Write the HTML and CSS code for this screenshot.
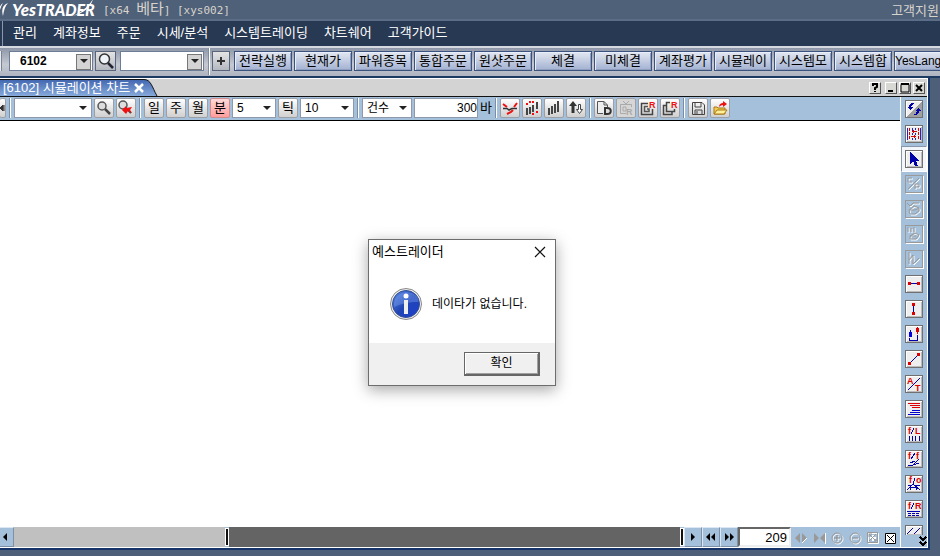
FILE: index.html
```html
<!DOCTYPE html>
<html lang="ko">
<head>
<meta charset="utf-8">
<title>YesTrader</title>
<link rel="stylesheet" href="styles.css">
</head>
<body>
<header class="titlebar">
  <svg class="wing" width="12" height="20" viewBox="0 0 12 20" aria-hidden="true"><path d="M8 3C3 5 1 9 3 16C4 10 5 6 8 3ZM3 3C0 5-1 8-1 12C1 8 1 6 3 3Z" fill="#fff"/></svg>
  <span class="logo"><span class="logo-yes">Yes</span> <span class="logo-trader">TRADER</span>
    <svg class="swash" width="24" height="18" viewBox="0 0 24 18" aria-hidden="true"><path d="M1 17C10 13 16 8 21 0C19 8 12 14 1 17Z" fill="#fff"/></svg>
  </span>
  <span class="session">[x64 <span class="session-ko">베타</span>] [xys002]</span>
  <a class="support" href="#">고객지원</a>
</header>
<nav class="menubar">
  <a href="#">관리</a><a href="#">계좌정보</a><a href="#">주문</a><a href="#">시세/분석</a><a href="#">시스템트레이딩</a><a href="#">차트쉐어</a><a href="#">고객가이드</a>
</nav>
<div class="quickbar">
  <span class="grip"></span>
  <span class="combo"><select class="bold" aria-label="화면번호"><option>6102</option></select></span>
  <button class="square" aria-label="검색"><svg width="18" height="18" viewBox="0 0 18 18"><circle cx="7.500" cy="7" r="5" fill="#eef4fa" stroke="#333" stroke-width="1.500"/><path d="M11 11L16 16" stroke="#223" stroke-width="2.500"/></svg></button>
  <span class="combo second"><select aria-label="종목"><option></option></select></span>
  <span class="divider"></span>
  <button class="square plus" aria-label="추가"><svg width="10" height="10" viewBox="0 0 10 10"><path d="M1 5H9M5 1V9" stroke="#333" stroke-width="2"/></svg></button>
  <div class="shortcuts">
    <button>전략실행</button><button>현재가</button><button>파워종목</button><button>통합주문</button><button>원샷주문</button><button>체결</button><button>미체결</button><button>계좌평가</button><button>시뮬레이</button><button>시스템모</button><button>시스템합</button><button class="latin">YesLang</button>
  </div>
</div>
<main class="window">
  <div class="tabrow">
    <div class="tab">
      <svg class="tabshape" viewBox="0 0 158 17" width="158" height="17" aria-hidden="true"><defs><linearGradient id="tg" x2="0" y2="1"><stop stop-color="#4266b0"/><stop offset="1" stop-color="#86aada"/></linearGradient></defs><path d="M0 .5H144C151 .5 152 8 157 17H0Z" fill="url(#tg)"/><path d="M0 .5H144C151 .5 152 8 157 17" fill="none" stroke="#111"/></svg>
      <span>[6102] 시뮬레이션 차트</span>
      <button aria-label="탭 닫기"><svg width="10" height="10" viewBox="0 0 10 10"><path d="M1 1L9 9M9 1L1 9" stroke="#fff" stroke-width="2.500"/></svg></button>
    </div>
    <div class="controls">
      <button class="help" aria-label="도움말"><svg width="12" height="12" viewBox="0 0 12 12"><path d="M4 4V2H8V5L6 6V8M6 9V10" fill="none" stroke="#000" stroke-width="2"/></svg></button>
      <button aria-label="최소화"><svg width="12" height="12"><path d="M3 9H8" stroke="#000" stroke-width="2"/></svg></button>
      <button aria-label="최대화"><svg width="12" height="12"><path d="M2 2.500H10V10H2Z" fill="none" stroke="#000"/><path d="M2 2H10" stroke="#000" stroke-width="2"/></svg></button>
      <button aria-label="닫기"><svg width="12" height="12"><path d="M3 3L9 9M9 3L3 9" stroke="#000" stroke-width="2"/></svg></button>
    </div>
  </div>
  <div class="body">
    <div class="chart">
      <div class="tools">
        <button class="tool cut" aria-label="이전"><svg width="6" height="18"><path d="M0 9L3 6V12ZM4 6V12" fill="#333" stroke="#333"/></svg></button>
        <span class="divider"></span>
        <span class="drop w78"><select aria-label="종목코드"><option></option></select></span>
        <button class="tool" aria-label="찾기"><svg width="18" height="18"><circle cx="7" cy="7" r="4" fill="#ddd" stroke="#555" stroke-width="1.500"/><path d="M10 10L15 15" stroke="#444" stroke-width="2.500"/></svg></button>
        <button class="tool" aria-label="다시 찾기"><svg width="18" height="18"><circle cx="6" cy="6" r="4" fill="#ddd" stroke="#555" stroke-width="1.500"/><path d="M9 9L14 14" stroke="#444" stroke-width="2"/><path d="M5 11L9 7V9L15 8L13 11L15 14L11 12L9 15Z" fill="#e11"/></svg></button>
        <span class="divider"></span>
        <button class="tool">일</button><button class="tool">주</button><button class="tool">월</button><button class="tool on">분</button>
        <span class="drop w44"><select aria-label="분 단위"><option>5</option></select></span>
        <button class="tool">틱</button>
        <span class="drop w54"><select aria-label="틱 단위"><option>10</option></select></span>
        <span class="divider"></span>
        <span class="drop w50"><select aria-label="기준"><option>건수</option></select></span>
        <label class="bars"><input value="300" aria-label="바 개수"><span>바</span></label>
        <span class="divider"></span>
        <button class="tool" aria-label="추세"><svg width="18" height="18"><path d="M2 9.500H6L8 11L11 9.500H16" fill="none" stroke="#333" stroke-width="1.500"/><path d="M2 5L6 8M6 15L10 13L12 11M13 8L16 4" fill="none" stroke="#e11" stroke-width="2"/></svg></button>
        <button class="tool" aria-label="신호"><svg width="18" height="18" shape-rendering="crispEdges"><path d="M4 9V16M7 8V15M10 6V13M14 3V10" stroke="#444" stroke-width="2"/><path d="M3 5H5M6 3H8M9 3H11M9 15H11M13 13H15" stroke="#e11" stroke-width="2"/></svg></button>
        <button class="tool" aria-label="막대"><svg width="18" height="18" shape-rendering="crispEdges"><path d="M4 9V16M7 7V15M10 5V14M13 2V13" stroke="#444" stroke-width="2"/></svg></button>
        <button class="tool" aria-label="정렬"><svg width="18" height="18"><path d="M6 2L10 7H7.500V14H4.500V7H2Z" fill="#333"/><path d="M11.500 5.500H13.500V10.500H15.500L12.500 14.500L9.500 10.500H11.500Z" fill="#fff" stroke="#444"/></svg></button>
        <span class="divider"></span>
        <button class="tool" aria-label="문서"><svg width="18" height="18"><path d="M8 14.500H2.500V2.500H9L12.500 6V8M9 2.500V6H12" fill="#eee" stroke="#555"/><path d="M10 9V15H12C17 15 17 9 12 9Z" fill="none" stroke="#333" stroke-width="2"/></svg></button>
        <button class="tool off" aria-label="방송"><svg width="18" height="18"><path d="M6 2L9 5L12 2M9 14.500H3.500V5.500H14.500V8M6 8H9V12H6Z" fill="none" stroke="#aaa"/><text x="9" y="16" class="mark gray">R</text></svg></button>
        <button class="tool" aria-label="그룹 복원"><svg width="18" height="18"><path d="M9 4.500H2.500V15.500H13.500V10" fill="none" stroke="#444" stroke-width="1.500"/><path d="M9 7.500H5.500V12.500H10V10H8" fill="none" stroke="#555" stroke-width="1.500"/><text x="10" y="9" class="mark">R</text></svg></button>
        <button class="tool" aria-label="복원"><svg width="18" height="18"><path d="M9 3.500H5.500V12.500H13.500V10M5 6.500H2.500V15.500H11V13" fill="none" stroke="#444" stroke-width="1.500"/><text x="10" y="9" class="mark">R</text></svg></button>
        <span class="divider"></span>
        <button class="tool" aria-label="저장"><svg width="18" height="18"><path d="M3.500 3.500H13L15.500 6V15.500H3.500ZM6 4V8H12V4M6 15V11H13V15M8 12V15" fill="none" stroke="#444"/></svg></button>
        <button class="tool" aria-label="열기"><svg width="18" height="18"><path d="M3 15V8H6L7 9H14V15Z" fill="#f2cc58" stroke="#a87812"/><path d="M3 15L6 11H16L13 15Z" fill="#fff09a" stroke="#a87812"/><path d="M8 8C8 5 10 4 12 4V2L16 5L12 8V6C10 6 9 7 8 8Z" fill="#e11"/></svg></button>
      </div>
      <div class="canvas"></div>
      <div class="scroll">
        <button class="arrow first" aria-label="왼쪽"><svg width="12" height="12"><path d="M2 6L6 2V10Z"/></svg></button>
        <div class="track"></div><span class="handle"></span><div class="range"></div><span class="handle"></span>
        <button class="arrow" aria-label="오른쪽"><svg width="12" height="12"><path d="M8 6L4 2V10Z"/></svg></button>
        <button class="arrow" aria-label="빠르게 왼쪽"><svg width="12" height="12"><path d="M1 6L5 2V10ZM6 6L10 2V10Z"/></svg></button>
        <button class="arrow" aria-label="빠르게 오른쪽"><svg width="12" height="12"><path d="M6 6L2 2V10ZM11 6L7 2V10Z"/></svg></button>
        <input class="count" value="209" aria-label="표시 개수">
        <div class="zooms">
          <button aria-label="넓게"><svg width="14" height="14"><path d="M1 7L6 2V12Z" fill="#999"/><path d="M8 2L13 7L8 12Z" fill="#999"/><path d="M8 12L13 7" stroke="#fff"/></svg></button>
          <button aria-label="좁게"><svg width="14" height="14"><path d="M2 2L7 7L2 12ZM13 2L8 7L13 12Z" fill="#999"/><path d="M13.500 2V13" stroke="#fff"/></svg></button>
          <button aria-label="확대"><svg width="14" height="14"><circle cx="8" cy="8" r="5" fill="none" stroke="#fff"/><path d="M5 8H11M8 5V11" stroke="#fff"/><circle cx="7" cy="7" r="5" fill="none" stroke="#999"/><path d="M4 7H10M7 4V10" stroke="#888"/></svg></button>
          <button aria-label="축소"><svg width="14" height="14"><circle cx="8" cy="8" r="5" fill="none" stroke="#fff"/><path d="M5 8H11" stroke="#fff"/><circle cx="7" cy="7" r="5" fill="none" stroke="#999"/><path d="M4 7H10" stroke="#888"/></svg></button>
          <button aria-label="맞춤"><svg width="14" height="14"><path d="M2.500 2.500H12.500V12.500H2.500Z" fill="none" stroke="#fff"/><path d="M4 7H10M7 4V10" stroke="#fff" stroke-width="2"/><path d="M1.500 1.500H11.500V11.500H1.500ZM3 3L10 10M10 3L3 10M3 6V3H6M8 10H10V8" fill="none" stroke="#999"/></svg></button>
          <button aria-label="초기화"><svg width="14" height="14"><path d="M1.500 2.500H11.500V12.500H1.500Z" fill="#fff" stroke="#000"/><path d="M3 4L10 11M10 4L3 11" stroke="#000"/></svg></button>
        </div>
      </div>
    </div>
    <aside class="side">
      <button aria-label="새로고침"><svg viewBox="0 0 16 16"><path d="M0 16L16 0V16Z" fill="#a0a0a0"/><path d="M8 2C5 2 3 3 3 6H1L4 9L7 6H5C5 4 6 3 8 3ZM8 14C12 14 13 12 13 10H15L12 7L9 10H11C11 12 10 13 8 13Z" fill="#00a"/></svg></button>
      <button aria-label="동기화"><svg viewBox="0 0 16 16"><path d="M1.500 2V14M14.500 2V14M6.500 2V5M6.500 7V9M6.500 12V14M9.500 2V4M9.500 7V9M9.500 12V14" stroke="#22c"/><path d="M3.500 2V14M12.500 2V14" stroke="#d00" stroke-dasharray="3 1"/><path d="M6 5.500H11M5 10.500H10M7.500 4V7M8.500 9V12" stroke="#d00"/></svg></button>
      <span class="picked"><button aria-label="선택"><svg viewBox="0 0 16 16"><path d="M4 1V13L7 10L9 15H12L10 10H13Z" fill="#00a"/></svg></button></span>
      <button class="dis" aria-label="도구 1" disabled><svg viewBox="0 0 16 16"><path d="M3 14L14 3M7 3H3V7H7M10 14V9H14V12H10" class="w"/><path d="M2 13L13 2M6 2H2V6H6M9 13V8H13V11H9" class="g"/></svg></button>
      <button class="dis" aria-label="도구 2" disabled><svg viewBox="0 0 16 16"><path d="M2 3L5 6L8 3H14M4 10L9 6L14 8V11L10 14H5Z" class="w"/><path d="M1 2L4 5L7 2H13M3 9L8 5L13 7V10L9 13H4ZM4 9H9L13 7" class="g"/></svg></button>
      <button class="dis" aria-label="도구 3" disabled><svg viewBox="0 0 16 16"><path d="M3 2V7M6 3V7M9 2V7M5 11L10 8L14 10L11 14H5Z" class="w"/><path d="M2 1V6M5 2V6M8 1V6M4 10L9 7L13 9L10 13H4ZM4 10H10" class="g"/></svg></button>
      <button class="dis" aria-label="도구 4" disabled><svg viewBox="0 0 16 16"><path d="M4 2V14M4 10L8 5V14L14 8" class="w"/><path d="M3 1V13M3 9L7 4V13L13 7" class="g"/></svg></button>
      <button aria-label="수평선"><svg viewBox="0 0 16 16"><path d="M5 7.500H12" stroke="#00a"/><path d="M2 6H5V9H2ZM11 6H14V9H11Z" fill="#d00"/></svg></button>
      <button aria-label="수직선"><svg viewBox="0 0 16 16"><path d="M7.500 4V12" stroke="#00a"/><path d="M6 2H9V5H6ZM6 11H9V14H6Z" fill="#d00"/></svg></button>
      <button aria-label="구간"><svg viewBox="0 0 16 16"><path d="M3 6H6V11H3ZM4 4H5V6H4Z" fill="#00d"/><path d="M3.500 12V14.500H11.500V9" fill="none" stroke="#00a"/><path d="M10 2H13V6H10ZM11 1H12V8H11Z" fill="#d00"/></svg></button>
      <button aria-label="추세선"><svg viewBox="0 0 16 16"><path d="M4 12L12 4" stroke="#00a"/><path d="M2 11H5V14H2ZM11 2H14V5H11Z" fill="#d00"/></svg></button>
      <button aria-label="문자"><svg viewBox="0 0 16 16"><path d="M2 14L14 2" stroke="#00a"/><text x="1" y="8" class="glyph">A</text><text x="9" y="15" class="glyph">T</text></svg></button>
      <button aria-label="수평 비율"><svg viewBox="0 0 16 16"><path d="M2 2H14V3H2ZM4 4H14V5H4ZM6 6H14V7H6Z" fill="#d00"/><path d="M6 9H14V10H6ZM4 11H14V12H4ZM2 13H14V14H2Z" fill="#00c"/></svg></button>
      <button aria-label="수직 비율"><svg viewBox="0 0 16 16"><text x="2" y="8" class="glyph">f</text><text x="9" y="8" class="glyph">L</text><path d="M5 8L8 2M3.500 10V15M6.500 10V15M9.500 10V15M13.500 10V15" stroke="#00a"/></svg></button>
      <button aria-label="호 비율"><svg viewBox="0 0 16 16"><text x="2" y="8" class="glyph">f</text><text x="10" y="8" class="glyph">f</text><path d="M5 8L9 2M2 14H7L13 8M4 12L9 10M7 14L13 12" fill="none" stroke="#00a"/></svg></button>
      <button aria-label="원 비율"><svg viewBox="0 0 16 16"><text x="3" y="7" class="glyph">f</text><text x="10" y="7" class="glyph">o</text><path d="M9 2L7 8M1 14L7 8L14 14M4 14C4 10 11 10 11 14M2 10L5 9M10 9L14 10" fill="none" stroke="#00a"/></svg></button>
      <button aria-label="되돌림"><svg viewBox="0 0 16 16"><text x="2" y="8" class="glyph">f</text><text x="9" y="8" class="glyph">R</text><path d="M5 8L8 2M1 10.500H14" stroke="#00a"/><path d="M2 12.500H14M2 14.500H14" stroke="#00a" stroke-dasharray="3 1"/></svg></button>
      <button class="clipped" aria-label="평행선"><svg viewBox="0 0 16 16"><path d="M1 8L7 2M8 8L14 2" stroke="#00a"/></svg></button>
      <button class="more" aria-label="더 보기"><svg viewBox="0 0 8 10"><path d="M1 1L4 4L7 1M1 6L4 9L7 6" fill="none" stroke="#000" stroke-width="2"/></svg></button>
    </aside>
  </div>
</main>
<section class="dialog" role="dialog" aria-labelledby="dlg">
  <div class="dialog-head"><span id="dlg">예스트레이더</span>
    <button aria-label="닫기"><svg width="12" height="12"><path d="M1 1L11 11M11 1L1 11" stroke="#111" stroke-width="1.200"/></svg></button></div>
  <div class="dialog-body">
    <svg width="32" height="32" viewBox="0 0 32 32" aria-hidden="true"><defs><linearGradient id="ig" x2="1" y2="1"><stop stop-color="#5e8fe8"/><stop offset=".5" stop-color="#2145b4"/><stop offset="1" stop-color="#1d3fd0"/></linearGradient></defs><circle cx="16" cy="16" r="15.500" fill="#eee" stroke="#888"/><circle cx="16" cy="16" r="13.500" fill="url(#ig)" stroke="#334f94"/><path d="M4 19C3 8 12 2 22 5C29 8 29 13 28 14C20 14 10 16 4 19Z" fill="#7fa6f0" opacity=".4"/><circle cx="16" cy="8" r="2.500" fill="#fff"/><path d="M14 12H18V26H14Z" fill="#eee"/></svg>
    <p>데이타가 없습니다.</p>
  </div>
  <div class="dialog-foot"><button>확인</button></div>
</section>
</body>
</html>
```
FILE: styles.css
```css
* { box-sizing: border-box; }
body {
  margin: 0; height: 100vh; overflow: hidden; display: flex; flex-direction: column;
  background: #4d5f79; color: #000;
  font: 13px/16px "Liberation Sans", "Noto Sans CJK KR", sans-serif;
}
button, input, select { font: inherit; color: inherit; margin: 0; padding: 0; border-radius: 0; }
button { display: flex; align-items: center; justify-content: center; flex: none; white-space: nowrap; }
svg { display: block; flex: none; }
a { color: inherit; text-decoration: none; white-space: nowrap; }

.titlebar { height: 21px; flex: none; display: flex; align-items: center; background: #4f6079; border-bottom: 2px solid #5b6d87; color: #d8d4cc; }
.logo { position: relative; width: 86px; margin-right: 5px; padding-top: 2px; color: #fff; font: italic 900 14px/18px Lato, sans-serif; white-space: nowrap; }
.logo-yes { font-size: 17px; }
.logo-trader { font-size: 16px; margin-left: -3px; }
.swash { position: absolute; left: 60px; top: 0; }
.session { font: 11px/20px "DejaVu Sans Mono", "Noto Sans CJK KR", monospace; white-space: pre; }
.session-ko { font-size: 15px; }
.support { margin-left: auto; padding: 2px 1px 0 0; }

.menubar { height: 25px; flex: none; display: flex; align-items: center; gap: 16px; padding: 0 10px 2px; margin-left: 2px; border-left: 1px solid #8b98ab; background: #283953; box-shadow: -3px 0 #283953; color: #fff; }

.quickbar { height: 32px; flex: none; display: flex; align-items: center; padding-bottom: 2px; background: linear-gradient(#8e97a8, #c5c9d2 60%, #aeb4c0); border-top: 2px solid #d6dae0; border-bottom: 2px solid #1d3a63; overflow: hidden; }
.grip { width: 2px; height: 20px; background: #e8ebf0; border-right: 1px solid #7b8494; margin-right: 7px; flex: none; }
.combo, .drop { position: relative; flex: none; height: 20px; background: #fff; border: 1px solid #6c7d98; }
.combo { width: 84px; }
.combo select, .drop select { appearance: none; width: 100%; height: 100%; border: 0; background: none; padding-left: 4px; display: block; font-size: 12px; line-height: 16px; }
.combo select.bold { font-weight: bold; padding-left: 10px; }
.combo::before { content: ""; position: absolute; right: 1px; top: 2px; width: 13px; height: 14px; background: #d4d4d4; border: 1px solid #777; }
.combo::after, .drop::after { content: ""; position: absolute; pointer-events: none; right: 4px; top: 7px; border: 4px solid transparent; border-top-color: #222; border-bottom: 0; }
.square { width: 21px; height: 20px; margin: 0 4px 0 2px; border: 1px solid #59657a; background: linear-gradient(#e4e4e4, #b4b8c0); }
.plus { width: 18px; margin: 0 4px 0 2px; }
.divider { flex: none; width: 2px; height: 20px; border-left: 1px solid #7d8ca1; background: #fff; }
.quickbar .divider { margin: 0 0 0 4px; height: 28px; }
.shortcuts { display: flex; gap: 2px; }
.shortcuts button { width: 58px; height: 20px; border: 1px solid #3b527e; box-shadow: inset 1px 1px #e9effa, inset -1px -1px #8f9fc0; background: linear-gradient(#e2e7f1, #a3b2d2); }
.shortcuts .latin { justify-content: flex-start; font-size: 12px; }

.window { flex: 1; min-height: 0; margin: 0 10px 6px 0; display: flex; flex-direction: column; border-right: 2px solid #173468; border-bottom: 2px solid #173468; padding: 0 1px 1px 0; background: #fff; }
.tabrow { height: 19px; flex: none; display: flex; justify-content: space-between; background: #d3d3d3; border-bottom: 1px solid #111; border-top: 1px solid #fff; }
.tab { position: relative; display: flex; align-items: center; gap: 4px; padding: 1px 22px 0 3px; color: #fff; }
.tabshape { position: absolute; left: 0; top: 0; }
.tab span, .tab button { position: relative; white-space: nowrap; }
.tab button { border: 0; background: none; }
.controls { display: flex; gap: 2px; padding: 3px 2px 0 0; }
.controls button { width: 12px; height: 12px; border: 1px solid; border-color: #fff #555 #555 #fff; background: #d8d8d4; }
.controls .help { margin-right: 2px; }

.body { flex: 1; min-height: 0; display: flex; }
.chart { flex: 1; min-width: 0; display: flex; flex-direction: column; }
.tools { height: 24px; flex: none; display: flex; align-items: center; gap: 2px; padding-bottom: 2px; background: #a5c0da; border-bottom: 1px solid #000; }
.tool { width: 20px; height: 20px; border: 1px solid #9d9fa6; border-radius: 2px; background: linear-gradient(#fff, #e6e6e6 50%, #d0d0d0); }
.tool.on { background: linear-gradient(#ffd9d9, #ff9d9d); border-color: #d08b8b; }
.tool.off { background: #d6d6d6; }
.tool.cut { width: 6px; border-left: 0; }
.tools .divider { margin: 0 1px; }
.drop { border-color: #8e9aac; }
.w78 { width: 78px; } .w44 { width: 44px; } .w54 { width: 54px; } .w50 { width: 50px; }
.bars { display: flex; align-items: center; gap: 2px; }
.bars input { width: 64px; height: 20px; border: 1px solid #8e9aac; text-align: right; font-size: 12px; background: #fff; }
.mark { font: bold 9px "Liberation Sans", sans-serif; fill: #e11; }
.mark.gray { fill: #aaa; }
.canvas { flex: 1; background: #fff; }
.scroll { height: 20px; flex: none; display: flex; background: #a5c0da; }
.arrow { width: 18px; height: 20px; border: 1px solid; border-color: #dbe8f4 #7c91a8 #7c91a8 #dbe8f4; background: #a5c0da; }
.arrow.first { width: 14px; border-left: 0; }
.track { flex: 211; background: #c0c0c0; }
.range { flex: 452; background: #646464; }
.handle { width: 4px; margin: 1px 0; border: 1px solid #fff; background: #111; }
.count { width: 53px; height: 20px; border: 2px solid; border-color: #666 #eee #eee #666; text-align: right; padding-right: 2px; background: #fff; }
.zooms { display: flex; align-items: center; gap: 4px; padding: 2px 2px 0 3px; }
.zooms button { border: 0; background: none; }

.side { width: 27px; flex: none; display: flex; flex-direction: column; align-items: center; gap: 7px; padding: 3px 0 0; overflow: hidden; background: #a5c0da; border-left: 1px solid #fff; }
.side button { width: 18px; height: 18px; border: 1px solid #707070; background: #eee; box-shadow: inset 1px 1px #fff, inset -1px -1px #bbb; }
.side button svg { width: 16px; height: 16px; shape-rendering: crispEdges; }
.picked { flex: none; padding: 3px; margin: -4px 0; background: #f3f7fb; border: 1px solid; border-color: #8796a8 #fff #fff #8796a8; }
.side .dis { background: #a5c0da; border: 1px solid #999; box-shadow: 1px 1px #fff; }
.w, .g { fill: none; stroke: #fff; }
.g { stroke: #999; }
.side .dis svg { shape-rendering: auto; }
.glyph { font: bold 9px "Liberation Sans", sans-serif; fill: #d00; }
.side .clipped { height: 10px; align-items: flex-start; overflow: hidden; border-bottom: 0; }
.side .more { width: 8px; height: 10px; align-self: flex-end; margin-top: -6px; border: 0; background: none; box-shadow: none; }
.side .more svg { width: 8px; height: 10px; }

.dialog { position: absolute; left: 368px; top: 239px; width: 188px; border: 1px solid #6d6d6d; background: #fff; box-shadow: 0 4px 14px rgba(0, 0, 0, .35); }
.dialog-head { display: flex; justify-content: space-between; align-items: center; height: 24px; padding: 0 9px 0 3px; }
.dialog-head button { border: 0; background: none; }
.dialog-body { display: flex; align-items: center; gap: 10px; height: 79px; padding: 1px 21px 0; font-size: 12px; }
.dialog-body p { margin: 0; white-space: nowrap; }
.dialog-foot { display: flex; justify-content: flex-end; padding: 9px 15px; background: #f0f0f0; font-size: 12px; }
.dialog-foot button { width: 76px; height: 24px; padding-bottom: 2px; background: #f0f0f0; border: 1px solid #666; border-right-width: 2px; border-bottom-width: 2px; box-shadow: inset 1px 1px #fff, inset -1px -1px #a0a0a0; }
```
